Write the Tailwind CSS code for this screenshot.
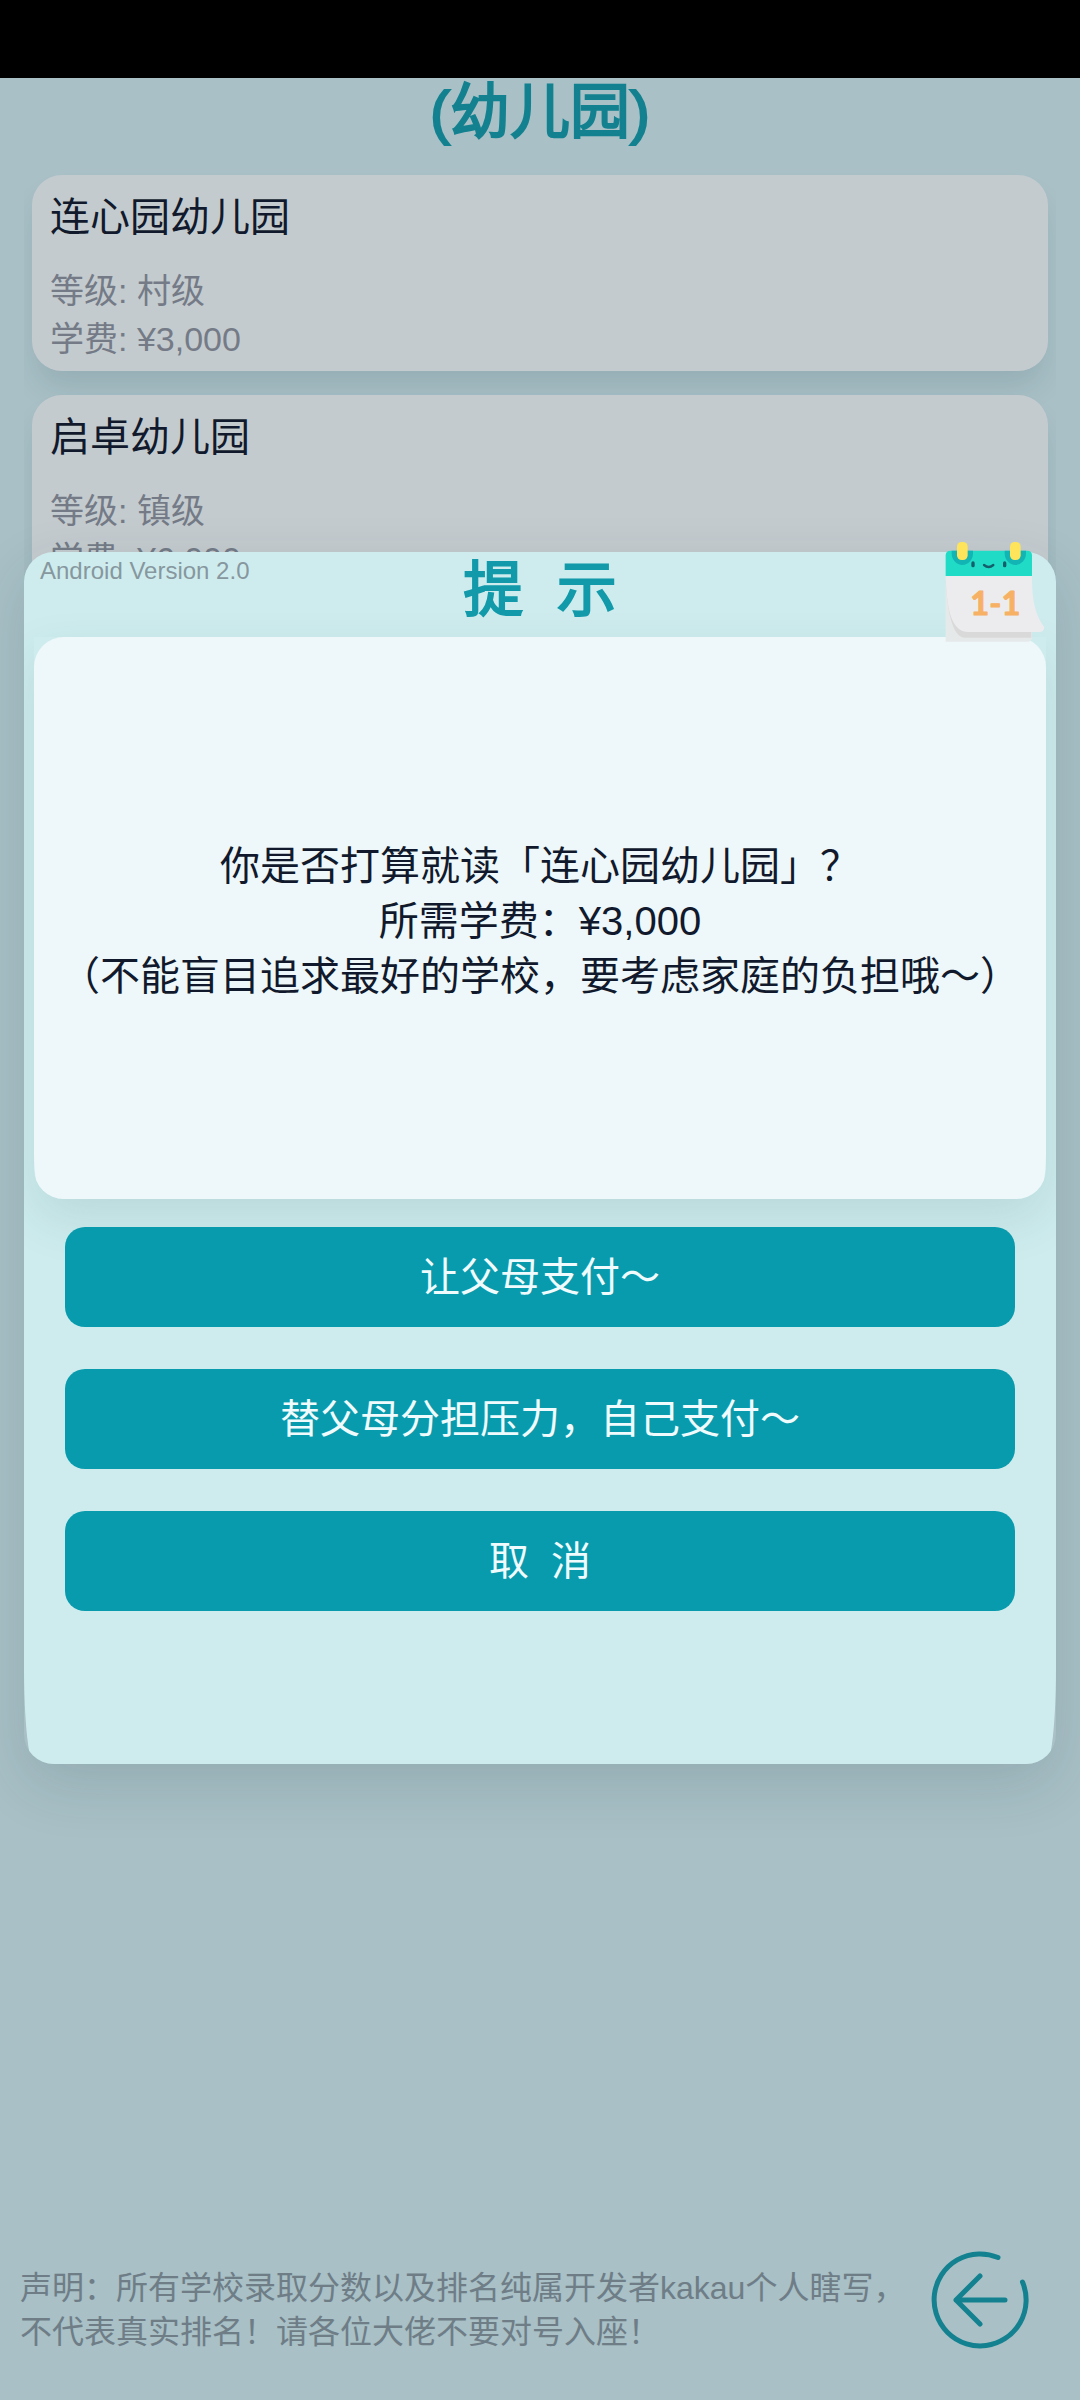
<!DOCTYPE html>
<html lang="zh-CN">
<head>
<meta charset="utf-8">
<meta name="viewport" content="width=device-width, initial-scale=1">
<title>幼儿园</title>
<script src="https://cdn.jsdelivr.net/npm/@tailwindcss/browser@4"></script>
</head>
<body class="relative flex min-h-screen flex-col bg-[#a8c0c6] font-['Liberation_Sans','Noto_Sans_CJK_SC',sans-serif] text-[#111a2c]">
  <div class="h-[78px] shrink-0 bg-black"></div>

  <main class="flex flex-1 flex-col">
    <h1 class="mb-3 text-center text-[60px] leading-[69px] text-[#13818f] [-webkit-text-stroke:2px_#13818f]">(幼儿园)</h1>
    <ul class="mx-6 flex flex-col gap-6 overflow-hidden px-2 pt-4 pb-10">
      <li class="rounded-[30px] bg-[#c4cbcf] px-[18px] pt-3 pb-2 shadow-[0_20px_30px_-5px_rgba(20,50,60,0.13)]">
        <h2 class="pb-5 text-[40px] leading-[60px]">连心园幼儿园</h2>
        <p class="text-[34px] leading-12 text-[#747b87]">等级: 村级<br>学费: ¥3,000</p>
      </li>
      <li class="rounded-[30px] bg-[#c4cbcf] px-[18px] pt-3 pb-2 shadow-[0_20px_30px_-5px_rgba(20,50,60,0.13)]">
        <h2 class="pb-5 text-[40px] leading-[60px]">启卓幼儿园</h2>
        <p class="text-[34px] leading-12 text-[#747b87]">等级: 镇级<br>学费: ¥6,000</p>
      </li>
    </ul>
  </main>

  <footer class="flex items-center justify-between pr-[50px] pb-[46px] pl-5">
    <p class="pt-5 text-[32px] leading-[44px] text-[#6f7d87]">声明：所有学校录取分数以及排名纯属开发者kakau个人瞎写，<br>不代表真实排名！请各位大佬不要对号入座！</p>
    <button type="button" aria-label="返回" class="size-[100px] shrink-0">
      <svg viewBox="0 0 100 100" class="size-full" fill="none" stroke="#13818f" stroke-width="5" stroke-linecap="round" stroke-linejoin="round">
        <path d="M68 7.5A46 46 0 1 0 92.5 32"/>
        <path d="M75 50H26M50 26 26 50l24 24"/>
      </svg>
    </button>
  </footer>

  <div role="dialog" aria-labelledby="dialog-title" class="absolute inset-x-6 top-[552px] rounded-[30px] shadow-[0_20px_60px_rgba(20,50,60,0.14)]">
    <div class="overflow-hidden rounded-b-[1%_8%]">
      <div class="rounded-[30px] bg-[#ceecee] px-[10px] pb-[153px]">
        <div class="relative h-[85px]">
          <span class="absolute top-1 left-[6px] text-2xl leading-[30px] text-[#86979e]">Android Version 2.0</span>
          <h2 id="dialog-title" class="pt-1 text-center text-[60px] leading-[69px] whitespace-pre text-[#129aaa] [-webkit-text-stroke:2px_#129aaa]">提  示</h2>
        </div>
        <div class="rounded-b-[30px] shadow-[0_20px_50px_rgba(30,80,80,0.12)]">
          <div class="overflow-hidden rounded-b-[1%_8%]">
            <p class="flex min-h-[562px] flex-col justify-center rounded-[30px] bg-[#eef7f9] pt-1.5 text-center text-[40px] leading-[55px]">
              <span>你是否打算就读「连心园幼儿园」？</span>
              <span>所需学费：¥3,000</span>
              <span>（不能盲目追求最好的学校，要考虑家庭的负担哦～）</span>
            </p>
          </div>
        </div>
        <div class="relative mt-7 flex flex-col gap-[42px] px-[31px] text-[40px] text-[#f0fbfd]">
          <button type="button" class="h-[100px] rounded-[20px] bg-[#089bad]">让父母支付～</button>
          <button type="button" class="h-[100px] rounded-[20px] bg-[#089bad]">替父母分担压力，自己支付～</button>
          <button type="button" class="h-[100px] rounded-[20px] bg-[#089bad] whitespace-pre">取  消</button>
        </div>
      </div>
    </div>
    <div class="absolute -top-[11px] right-[10px] size-[102px]">
      <svg viewBox="132 63 306 306" class="size-full">
        <path d="M137 168H396V350Q396 365 381 365H137Z" fill="#e6e9ea"/>
        <path d="M137 180Q146 353 195 353H394V330Z" fill="#dad9da"/>
        <path d="M137 168H396C396 240 404 280 432 320Q434 335 420 336H205C155 336 140 270 137 168Z" fill="#ececef"/>
        <path d="M137 168V106Q137 92 151 92H382Q396 92 396 106V168Z" fill="#20dcc6"/>
        <path d="M155 92H219V100A32 35 0 0 1 155 100ZM314 92H378V100A32 35 0 0 1 314 100Z" fill="#12b5b3"/>
        <rect x="171" y="66" width="32" height="54" rx="14" fill="#fee45a"/>
        <rect x="330" y="66" width="32" height="54" rx="14" fill="#fee45a"/>
        <rect x="214" y="124" width="10" height="18" rx="5" fill="#155e6b"/>
        <rect x="309" y="124" width="10" height="18" rx="5" fill="#155e6b"/>
        <path d="M252 135Q266 147 280 135" fill="none" stroke="#155e6b" stroke-width="7" stroke-linecap="round"/>
        <text x="286" y="285" text-anchor="middle" font-family="Lato, sans-serif" font-weight="700" font-size="98" fill="#f7b164" stroke="#f7b164" stroke-width="3" stroke-linejoin="round">1-1</text>
      </svg>
    </div>
  </div>
</body>
</html>
